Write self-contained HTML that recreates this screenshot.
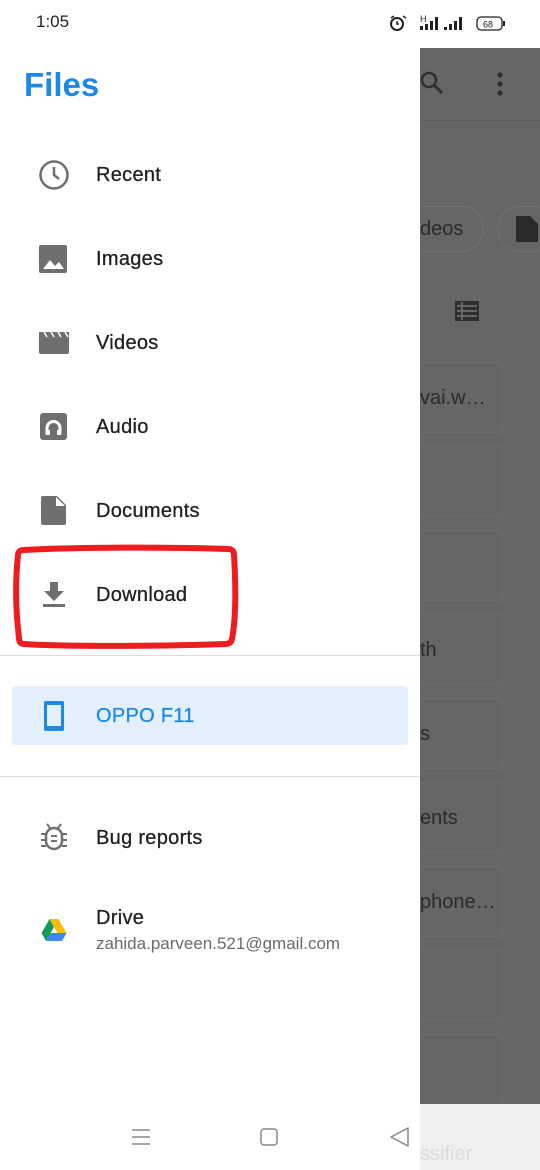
<!DOCTYPE html>
<html><head><meta charset="utf-8"><style>
*{margin:0;padding:0;box-sizing:border-box}
body{width:540px;height:1170px;position:relative;overflow:hidden;background:#fff;font-family:"Liberation Sans",Roboto,sans-serif}
.abs{position:absolute}
.dim{left:420px;top:48px;width:120px;height:1056px;background:#666}
.card{position:absolute;left:420px;width:83px;height:71px;border:1px solid #6e6e6e;border-left:none;border-radius:0 4px 4px 0}
.ct{position:absolute;left:420px;font-size:20px;color:#2a2a2a;white-space:nowrap}
.item{position:absolute;left:96px;font-size:20px;color:#202124;line-height:24px;-webkit-text-stroke:0.3px #202124;letter-spacing:0.3px}
.ic{position:absolute;left:38px}
</style></head><body>
<div class="abs" style="left:36px;top:12px;font-size:17px;color:#222">1:05</div>
<div class="abs" style="left:388px;top:12px;font-size:13px;color:#222">
<svg width="120" height="22" viewBox="0 0 120 22"><circle cx="9" cy="12" r="6" fill="none" stroke="#222" stroke-width="2"/><path d="M9 9v3h2M3 6l3-2M15 4l3 2" stroke="#222" stroke-width="1.5" fill="none"/>
<text x="32" y="10" font-size="9" fill="#222" font-family="Liberation Sans">H</text>
<rect x="32" y="14" width="3" height="4" fill="#222"/><rect x="37" y="12" width="3" height="6" fill="#222"/><rect x="42" y="9" width="3" height="9" fill="#222"/><rect x="47" y="5" width="3" height="13" fill="#222"/>
<rect x="56" y="15" width="3" height="3" fill="#222"/><rect x="61" y="12" width="3" height="6" fill="#222"/><rect x="66" y="9" width="3" height="9" fill="#222"/><rect x="71" y="5" width="3" height="13" fill="#222"/>
<rect x="89" y="5" width="25" height="13" rx="4" fill="none" stroke="#222" stroke-width="1.3"/><rect x="115" y="9" width="2" height="5" fill="#222"/>
<text x="95" y="15.5" font-size="9" fill="#222" font-family="Liberation Sans">68</text></svg></div>

<div class="dim abs"></div>
<div class="abs" style="left:420px;top:120px;width:120px;height:1px;background:#5d5d5d"></div>
<svg class="abs" style="left:418px;top:68px" width="30" height="30"><circle cx="11" cy="12" r="7" fill="none" stroke="#2e2e2e" stroke-width="2.5"/><path d="M16 17l8 8" stroke="#2e2e2e" stroke-width="3"/></svg>
<svg class="abs" style="left:494px;top:70px" width="12" height="28"><circle cx="6" cy="5" r="2.6" fill="#2e2e2e"/><circle cx="6" cy="14" r="2.6" fill="#2e2e2e"/><circle cx="6" cy="23" r="2.6" fill="#2e2e2e"/></svg>
<div class="abs" style="left:390px;top:206px;width:94px;height:46px;border:1px solid #707070;border-radius:23px"></div>
<div class="ct" style="top:218px">deos</div>
<div class="abs" style="left:497px;top:206px;width:60px;height:46px;border:1px solid #707070;border-radius:23px"></div>
<svg class="abs" style="left:514px;top:214px" width="26" height="30"><path d="M2 2h14l8 8v18H2z" fill="#2a2a2a"/></svg>
<svg class="abs" style="left:454px;top:300px" width="26" height="22"><rect x="1" y="1" width="24" height="20" fill="#2e2e2e"/><path d="M3 6h20M3 11h20M3 16h20M8 2v18" stroke="#666" stroke-width="2"/></svg>
<div class="card" style="top:362px"></div><div class="card" style="top:446px"></div><div class="card" style="top:530px"></div><div class="card" style="top:614px"></div><div class="card" style="top:698px"></div><div class="card" style="top:782px"></div><div class="card" style="top:866px"></div><div class="card" style="top:950px"></div><div class="card" style="top:1034px"></div>
<div class="ct" style="top:387px">vai.w…</div>
<div class="ct" style="top:639px">th</div>
<div class="ct" style="top:723px">s</div>
<div class="ct" style="top:807px">ents</div>
<div class="ct" style="top:891px">phone…</div>

<div class="abs" style="left:0;top:48px;width:420px;height:1060px;background:#fff"></div>
<div class="abs" style="left:0;top:1104px;width:540px;height:66px;background:#efefef"></div>
<div class="abs" style="left:0;top:1104px;width:420px;height:66px;background:#fff"></div>
<div class="abs" style="left:420px;top:1143px;font-size:20px;color:#dcdcdc">ssifier</div>
<svg class="abs" style="left:130px;top:1126px" width="24" height="22"><path d="M2 4h18M2 11h18M2 18h18" stroke="#888" stroke-width="1.5"/></svg>
<svg class="abs" style="left:259px;top:1127px" width="22" height="22"><rect x="2" y="2" width="16" height="16" rx="3" fill="none" stroke="#888" stroke-width="1.5"/></svg>
<svg class="abs" style="left:388px;top:1126px" width="24" height="22"><path d="M20 2v18L3 11z" fill="none" stroke="#888" stroke-width="1.5" stroke-linejoin="round"/></svg>

<div class="abs" style="left:24px;top:66px;font-size:33px;font-weight:bold;color:#1e88e5">Files</div>

<svg class="ic" style="top:159px" width="32" height="32"><circle cx="16" cy="16" r="13.5" fill="none" stroke="#6f6f6f" stroke-width="2.5"/><path d="M16 8v8l5 4" fill="none" stroke="#6f6f6f" stroke-width="2.5"/></svg>
<div class="item" style="top:163px">Recent</div>
<svg class="ic" style="top:244px" width="32" height="32"><rect x="1" y="1" width="28" height="28" rx="2" fill="#6f6f6f"/><path d="M5 25l7-9 5 6 4-4 5 7z" fill="#fff"/></svg>
<div class="item" style="top:247px">Images</div>
<svg class="ic" style="top:328px" width="32" height="30"><path d="M1 4h30v20a2 2 0 0 1-2 2H3a2 2 0 0 1-2-2z" fill="#6f6f6f"/><path d="M6 4l3 5M13 4l3 5M20 4l3 5M27 4l3 5" stroke="#fff" stroke-width="1.5"/></svg>
<div class="item" style="top:331px">Videos</div>
<svg class="ic" style="top:412px" width="32" height="30"><rect x="2" y="1" width="27" height="27" rx="3" fill="#6f6f6f"/><path d="M9 22v-6a6.5 6.5 0 0 1 13 0v6" fill="none" stroke="#fff" stroke-width="3"/><rect x="8" y="18" width="4" height="5" fill="#fff"/><rect x="19" y="18" width="4" height="5" fill="#fff"/></svg>
<div class="item" style="top:415px">Audio</div>
<svg class="ic" style="top:495px" width="32" height="32"><path d="M5 1h14l9 9v18a2 2 0 0 1-2 2H5a2 2 0 0 1-2-2V3a2 2 0 0 1 2-2z" fill="#6f6f6f"/><path d="M18 2v9h9" fill="#fff"/></svg>
<div class="item" style="top:499px">Documents</div>
<svg class="ic" style="top:580px" width="32" height="30"><path d="M12 2h8v9h6l-10 10-10-10h6z" fill="#6f6f6f"/><rect x="5" y="24" width="22" height="3" fill="#6f6f6f"/></svg>
<div class="item" style="top:583px">Download</div>
<svg class="abs" style="left:10px;top:543px" width="232" height="112"><path d="M8 12Q8 7 14 7C70 4 160 4 218 6Q224 6 224 12C226 45 226 75 222 96Q221 101 215 101C160 103 60 104 14 101Q9 101 9 95C6 70 5 40 8 12Z" fill="none" stroke="#ee1c1c" stroke-width="6" stroke-linejoin="round"/></svg>

<div class="abs" style="left:0;top:655px;width:420px;height:1px;background:#ddd"></div>
<div class="abs" style="left:12px;top:686px;width:396px;height:59px;background:#e3f0fc;border-radius:3px"></div>
<svg class="abs" style="left:43px;top:700px" width="22" height="32"><rect x="1" y="1" width="20" height="30" rx="2" fill="#1e88e5"/><rect x="4" y="5" width="14" height="21" fill="#e3f0fc"/></svg>
<div class="item" style="top:704px;color:#1e88e5;-webkit-text-stroke:0.3px #1e88e5">OPPO F11</div>
<div class="abs" style="left:0;top:776px;width:420px;height:1px;background:#ddd"></div>

<svg class="ic" style="top:822px;left:40px" width="28" height="30"><path d="M7 2l3 4M21 2l-3 4" stroke="#6f6f6f" stroke-width="2"/><rect x="6" y="6" width="16" height="21" rx="8" fill="none" stroke="#6f6f6f" stroke-width="2.5"/><path d="M1 12h5M22 12h5M1 18h5M22 18h5M1 24h5M22 24h5M11 14h6M11 19h6" stroke="#6f6f6f" stroke-width="2"/></svg>
<div class="item" style="top:826px">Bug reports</div>
<svg class="ic" style="top:918px;left:41px" width="26" height="24"><path d="M8.5 1h9l8 14h-9z" fill="#fbbc04"/><path d="M8.5 1L0.5 15l4.5 8 8-14z" fill="#0f9d58"/><path d="M5 23h16l4.5-8h-16z" fill="#4285f4"/></svg>
<div class="item" style="top:906px">Drive</div>
<div class="abs" style="left:96px;top:934px;font-size:17px;color:#6b6b6b">zahida.parveen.521@gmail.com</div>
</body></html>
